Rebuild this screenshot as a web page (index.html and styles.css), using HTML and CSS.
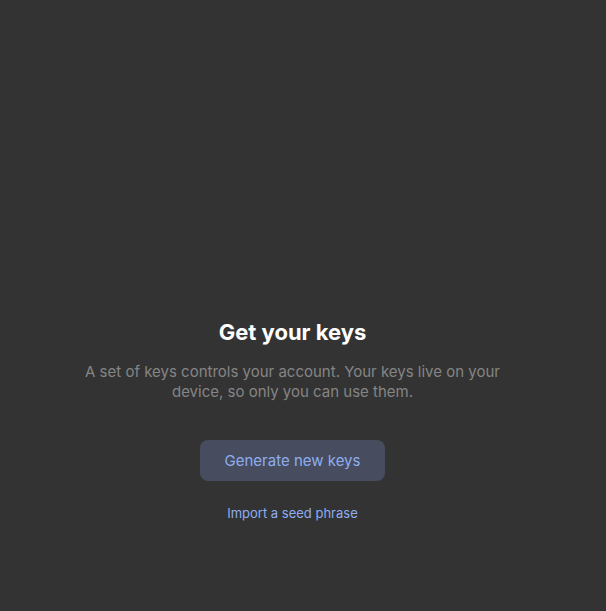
FILE: index.html
```html
<!DOCTYPE html>
<html>
<head>
<meta charset="utf-8">
<link rel="stylesheet" href="styles.css">
</head>
<body>
<main class="page">
  <section class="onboard">
    <h1 class="title">Get your keys</h1>
    <p class="desc">A set of keys controls your account. Your keys live on your device, so only you can use them.</p>
    <button class="primary">Generate new keys</button>
    <a class="link" href="#">Import a seed phrase</a>
  </section>
</main>
</body>
</html>
```
FILE: styles.css
```css
html, body {
  margin: 0;
  padding: 0;
  background: #333333;
  height: 100%;
}
body {
  font-family: Inter, "Noto Sans", sans-serif;
}
.page {
  width: 585px;
  height: 611px;
  display: flex;
  flex-direction: column;
  align-items: center;
}
.onboard {
  margin-top: 318px;
  display: flex;
  flex-direction: column;
  align-items: center;
  width: 440px;
}
.title {
  margin: 0;
  font-size: 22px;
  line-height: 29px;
  font-weight: 700;
  color: #ffffff;
}
.desc {
  margin: 15px 0 0;
  font-size: 15px;
  line-height: 20px;
  color: #858585;
  text-align: center;
}
.primary {
  margin-top: 38px;
  width: 185px;
  height: 41px;
  border: none;
  border-radius: 8px;
  background: #474c5e;
  color: #8eaef0;
  font-family: inherit;
  font-size: 15px;
}
.link {
  margin-top: 23px;
  font-size: 13px;
  line-height: 18px;
  color: #8eaef0;
  text-decoration: none;
}
```
